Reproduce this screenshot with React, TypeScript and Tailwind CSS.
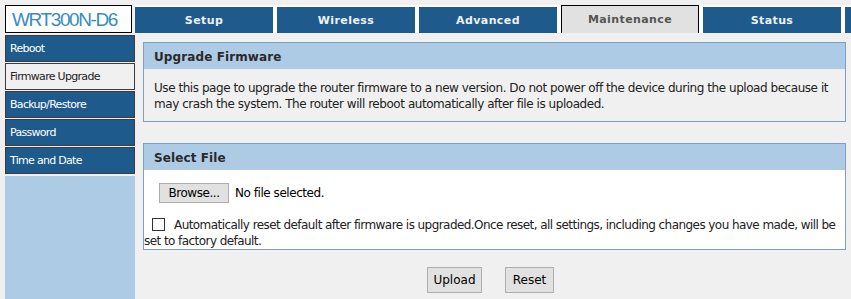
import React from "react";

const tabs = ["Setup", "Wireless", "Advanced", "Maintenance", "Status", ""];
const side = ["Reboot", "Firmware Upgrade", "Backup/Restore", "Password", "Time and Date"];

export default function App() {
  const font = { fontFamily: '"DejaVu Sans", Tahoma, sans-serif' };
  return (
    <div className="w-[851px] h-[299px] bg-[#f0f0f0] overflow-hidden flex text-[#222]" style={font}>
      <div className="w-[130px] shrink-0 ml-[5px] flex flex-col">
        <div className="mt-[5px] w-[127px] h-[28px] border border-black bg-white flex items-center pl-[6px]">
          <span className="text-[19px] text-[#3a8bc2] tracking-[-1.4px] leading-none" style={{ fontFamily: '"Liberation Sans", Arial, sans-serif' }}>
            WRT300N-D6
          </span>
        </div>
        <div className="mt-[2px] flex flex-col">
          {side.map((s) => {
            const active = s === "Firmware Upgrade";
            return (
              <div
                key={s}
                className={`h-[27px] mb-[1px] border border-[#3c3c3c] flex items-center pl-[4px] pt-[1px] text-[11px] tracking-[-0.7px] ${
                  active ? "bg-[#f0f0f0] text-[#222]" : "bg-[#1f5a8d] text-white"
                }`}
              >
                {s}
              </div>
            );
          })}
        </div>
        <div className="mt-[1px] flex-1 bg-[#aecbe6]" />
      </div>
      <div className="flex-1 min-w-0 flex flex-col">
        <div className="mt-[5px] h-[28px] bg-white flex items-end gap-[4px] overflow-hidden">
          {tabs.map((t, i) => {
            const active = t === "Maintenance";
            return (
              <div
                key={i}
                className={`shrink-0 w-[138px] flex items-center justify-center font-bold text-[11px] tracking-[0.4px] pt-[2px] ${
                  active
                    ? "h-[28px] bg-[#e1e1e1] border border-b-0 border-black text-[#555]"
                    : "h-[26px] bg-[#1f5a8d] text-[#eef2f6]"
                }`}
              >
                {t}
              </div>
            );
          })}
        </div>
        <div className="pl-[8px] pr-[5px] pt-[9px] flex flex-col">
          <div className="border border-[#7f9ec6]">
            <div className="h-[26px] bg-[#aecbe6] flex items-center pl-[10px] pt-[2px] font-bold text-[12px] tracking-[0.1px] text-[#2a2a2a]">
              Upgrade Firmware
            </div>
            <div className="pl-[10px] pr-[10px] pt-[11px] pb-[9px] text-[12px] leading-[16px] tracking-[-0.45px]">
              Use this page to upgrade the router firmware to a new version. Do not power off the device during the upload because it may crash the system. The router will reboot automatically after file is uploaded.
            </div>
          </div>
          <div className="mt-[21px] border border-[#7f9ec6]">
            <div className="h-[26px] bg-[#aecbe6] flex items-center pl-[10px] pt-[2px] font-bold text-[12px] tracking-[0.1px] text-[#2a2a2a]">
              Select File
            </div>
            <div className="bg-white pt-[13px] text-[12px] leading-[16px] tracking-[-0.45px]">
              <div className="flex items-center pl-[15px] h-[20px]">
                <div className="h-[20px] w-[70px] bg-[#e1e1e1] border border-[#adadad] flex items-center justify-center text-[12px] text-black">
                  Browse...
                </div>
                <span className="ml-[6px] text-black">No file selected.</span>
              </div>
              <div className="mt-[14px] tracking-[-0.56px]">
                <span className="inline-block w-[13px] h-[13px] border border-[#333] bg-white align-[-2px] ml-[8px] mr-[9px]" />
                Automatically reset default after firmware is upgraded.Once reset, all settings, including changes you have made, will be set to factory default.
              </div>
            </div>
          </div>
          <div className="mt-[17px] flex justify-center gap-[23px] pr-[8px]">
            <div className="h-[26px] w-[55px] bg-[#e1e1e1] border border-[#adadad] flex items-center justify-center text-[12px] text-black">
              Upload
            </div>
            <div className="h-[26px] w-[49px] bg-[#e1e1e1] border border-[#adadad] flex items-center justify-center text-[12px] text-black">
              Reset
            </div>
          </div>
        </div>
      </div>
    </div>
  );
}
